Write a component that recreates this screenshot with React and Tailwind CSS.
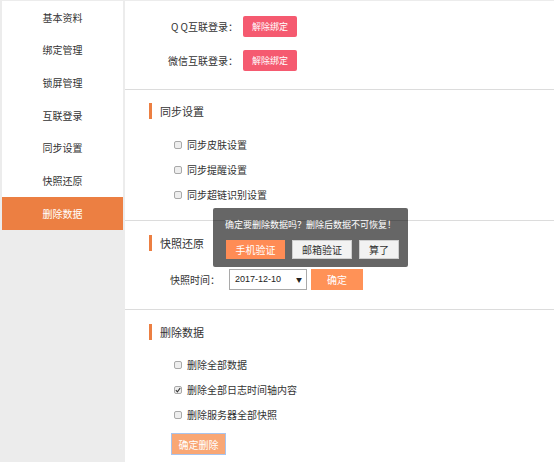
import React from "react";

const menu = ["基本资料", "绑定管理", "锁屏管理", "互联登录", "同步设置", "快照还原", "删除数据"];

const font = { fontFamily: '"Noto Sans CJK SC", "Liberation Sans", sans-serif' };

const Check = ({ checked, label }) => (
  <div className="flex h-[25px] items-center pl-[49px]">
    <span className="flex h-[8px] w-[8px] items-center justify-center rounded-[2px] border border-[#a9a9a9] bg-[#eeeeee]">
      {checked && (
        <svg width="6" height="6" viewBox="0 0 6 6">
          <path d="M0.8 3.2 L2.4 4.8 L5.2 1" stroke="#333" strokeWidth="1.1" fill="none" />
        </svg>
      )}
    </span>
    <span className="ml-[5px] text-[10px] text-[#333]">{label}</span>
  </div>
);

const Title = ({ children }) => (
  <div className="flex h-[16px] items-center pl-[24px]">
    <span className="h-[16px] w-[3px] bg-[#ec7f42]" />
    <span className="ml-[8px] text-[11px] text-[#333]">{children}</span>
  </div>
);

export default function App() {
  return (
    <div className="flex h-[462px] w-[554px] bg-[#ececec] pt-[1px]" style={font}>
      {/* sidebar */}
      <div className="ml-[2px] flex w-[121px] flex-col self-start bg-white">
        {menu.map((m, i) => (
          <div
            key={m}
            className={`flex h-[32.67px] items-center justify-center text-[10px] ${
              i === 6 ? "bg-[#ec7f42] text-white" : "text-[#333]"
            }`}
          >
            {m}
          </div>
        ))}
      </div>

      {/* main */}
      <div className="relative ml-[2px] flex-1 bg-white">
        {/* bindings */}
        <div className="flex h-[89px] flex-col gap-[13px] border-b border-[#dcdcdc] pt-[15px]">
          {["Q Q互联登录：", "微信互联登录："].map((l) => (
            <div key={l} className="flex h-[21px] items-center">
              <span className="w-[113px] text-right text-[10px] text-[#333]">{l}</span>
              <button className="ml-[5px] h-[21px] w-[54px] rounded-[2px] bg-[#f55a70] text-[9px] text-white">
                解除绑定
              </button>
            </div>
          ))}
        </div>

        {/* sync */}
        <div className="h-[131px] border-b border-[#dcdcdc] pt-[13px]">
          <Title>同步设置</Title>
          <div className="mt-[13px]">
            <Check label="同步皮肤设置" />
            <Check label="同步提醒设置" />
            <Check label="同步超链识别设置" />
          </div>
        </div>

        {/* snapshot */}
        <div className="h-[89px] border-b border-[#dcdcdc] pt-[14px]">
          <Title>快照还原</Title>
          <div className="mt-[18px] flex h-[21px] items-center">
            <span className="w-[95px] text-right text-[10px] text-[#333]">快照时间：</span>
            <div className="ml-[9px] flex h-[21px] w-[78px] items-center justify-between border border-[#a9a9a9] bg-white pl-[5px] pr-[4px]">
              <span className="text-[9px] text-[#222]" style={{ fontFamily: '"Liberation Sans", sans-serif' }}>
                2017-12-10
              </span>
              <span className="text-[6px] text-[#222]">▼</span>
            </div>
            <button className="ml-[4px] h-[21px] w-[52px] bg-[#ff9257] text-[10px] text-white">确定</button>
          </div>
        </div>

        {/* delete */}
        <div className="pt-[14px]">
          <Title>删除数据</Title>
          <div className="mt-[12px]">
            <Check label="删除全部数据" />
            <Check checked label="删除全部日志时间轴内容" />
            <Check label="删除服务器全部快照" />
          </div>
          <button className="ml-[46px] mt-[6px] h-[22px] w-[55px] border border-[#a8c4ee] bg-[#f9a775] text-[10px] text-white">
            确定删除
          </button>
        </div>

        {/* confirm popup */}
        <div className="absolute left-[88px] top-[207px] flex h-[59px] w-[195px] flex-col items-center rounded-[2px] bg-black/60 pt-[10px]">
          <span className="text-[9px] text-white">确定要删除数据吗？删除后数据不可恢复！</span>
          <div className="mt-[8px] flex w-full gap-[7px] pl-[13px]">
            <button className="h-[19px] w-[59px] bg-[#ff8c55] text-[10px] text-white">手机验证</button>
            <button className="h-[19px] w-[60px] border border-[#cfcfcf] bg-[#f2f2f2] text-[10px] text-[#333]">
              邮箱验证
            </button>
            <button className="h-[19px] w-[40px] border border-[#cfcfcf] bg-[#f2f2f2] text-[10px] text-[#333]">
              算了
            </button>
          </div>
        </div>
      </div>
    </div>
  );
}
